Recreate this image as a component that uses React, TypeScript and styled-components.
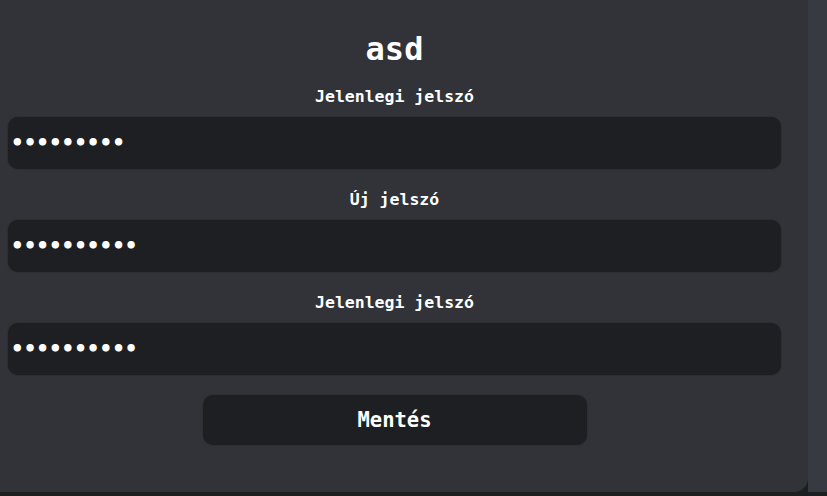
import { createGlobalStyle, styled } from "styled-components";

const GlobalStyle = createGlobalStyle`
  * {
    box-sizing: border-box;
  }
  body {
    margin: 0;
    background-color: #1b1f20;
    font-family: "DejaVu Sans Mono", "Liberation Mono", monospace;
    color: #ffffff;
  }
`;

const Page = styled.div`
  display: grid;
  grid-template-columns: 1fr 19px;
  grid-template-rows: 492px 4px;
  height: 496px;
`;

const Card = styled.div`
  background-color: #313338;
  border-bottom-right-radius: 14px;
  padding: 30px 27px 0 8px;
  display: flex;
  flex-direction: column;
  align-items: center;
`;

const Side = styled.div`
  background-color: #383a41;
`;

const Title = styled.h1`
  margin: 0 0 19px;
  font-size: 32px;
  line-height: 38px;
  font-weight: bold;
`;

const Form = styled.form`
  width: 100%;
  display: flex;
  flex-direction: column;
  align-items: center;
  gap: 21px;
`;

const Field = styled.div`
  width: 100%;
  display: flex;
  flex-direction: column;
  align-items: center;
  gap: 10px;
`;

const Label = styled.label`
  font-size: 16.5px;
  line-height: 20px;
  font-weight: bold;
`;

const PasswordInput = styled.input`
  width: 100%;
  height: 52px;
  border: none;
  outline: none;
  border-radius: 10px;
  background-color: #1e1f22;
  box-shadow: 0 0 2px rgba(0, 0, 0, 0.35);
  padding: 0 3px;
  color: #ffffff;
  font-family: "DejaVu Sans Mono", monospace;
  font-size: 21px;
  font-weight: bold;
  letter-spacing: 0;
`;

const SaveButton = styled.button`
  margin-top: -1px;
  width: 384px;
  height: 50px;
  border: none;
  border-radius: 10px;
  background-color: #1e1f22;
  box-shadow: 0 0 2px rgba(0, 0, 0, 0.3);
  color: #ffffff;
  font-family: "DejaVu Sans Mono", monospace;
  font-size: 20.5px;
  font-weight: bold;
`;

function App() {
  return (
    <>
      <GlobalStyle />
      <Page>
        <Card>
          <Title>asd</Title>
          <Form>
            <Field>
              <Label>Jelenlegi jelszó</Label>
              <PasswordInput type="password" defaultValue="asdasdasd" readOnly />
            </Field>
            <Field>
              <Label>Új jelszó</Label>
              <PasswordInput type="password" defaultValue="asdasdasda" readOnly />
            </Field>
            <Field>
              <Label>Jelenlegi jelszó</Label>
              <PasswordInput type="password" defaultValue="asdasdasda" readOnly />
            </Field>
            <SaveButton type="button">Mentés</SaveButton>
          </Form>
        </Card>
        <Side />
      </Page>
    </>
  );
}
export default App;
